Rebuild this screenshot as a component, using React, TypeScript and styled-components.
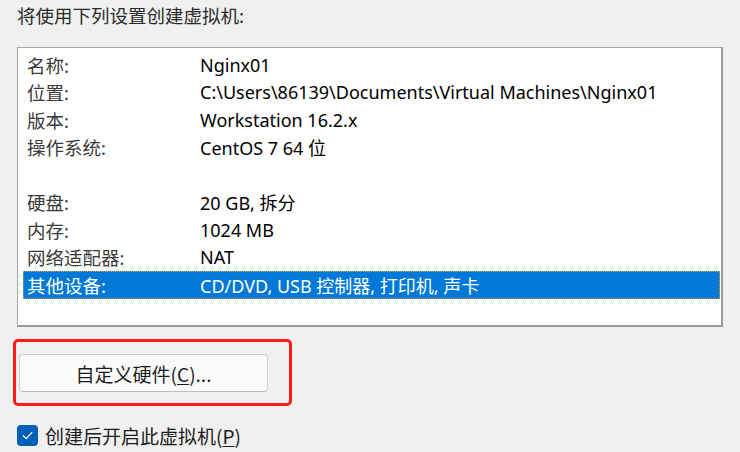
import React from "react";
import styled, { createGlobalStyle } from "styled-components";

const Global = createGlobalStyle`
  html, body { margin: 0; padding: 0; background: #f0f0f0; }
  body { font-family: "Noto Sans", "Noto Sans CJK SC", sans-serif; }
`;

const Page = styled.div`
  width: 740px;
  height: 452px;
  box-sizing: border-box;
  padding: 3px 0 0 17px;
  background: #f0f0f0;
  overflow: hidden;
  display: flex;
  flex-direction: column;
  align-items: flex-start;
`;

const Heading = styled.div`
  font-size: 18.5px;
  line-height: 24px;
  color: #2b2b2b;
  font-family: "Noto Sans CJK SC", "Noto Sans", sans-serif;
`;

const ListBox = styled.div`
  margin-top: 20px;
  width: 706px;
  height: 280px;
  box-sizing: border-box;
  background: #fff;
  border: 1px solid #a9a9a9;
  border-right: 2px solid #9a9a9a;
  border-bottom: 2px solid #9a9a9a;
  padding: 3px 1px 0 5px;
  display: flex;
  flex-direction: column;
`;

const Row = styled.div<{ $selected?: boolean }>`
  display: grid;
  grid-template-columns: 173px 1fr;
  height: 27.5px;
  align-items: center;
  box-sizing: border-box;
  padding-left: 4px;
  font-size: 18px;
  background: ${(p) => (p.$selected ? "#0078d7" : "transparent")};
  outline: ${(p) => (p.$selected ? "1px dotted #e39a4a" : "none")};
  outline-offset: -1px;
  color: ${(p) => (p.$selected ? "#fff" : "#000")};
`;

const Label = styled.span<{ $selected?: boolean }>`
  font-size: 18.5px;
  color: ${(p) => (p.$selected ? "#fff" : "#3a3a3a")};
  white-space: nowrap;
`;

const Value = styled.span`
  white-space: nowrap;
`;

const Spacer = styled.div`
  height: 27.5px;
`;

const Highlight = styled.div`
  margin: 12px 0 0 -4px;
  border: 3px solid #ff1c17;
  border-radius: 5px;
  padding: 12px 21px 11px 3px;
  display: flex;
`;

const Button = styled.button`
  width: 249px;
  height: 38px;
  box-sizing: border-box;
  background: #fbfbfb;
  border: 1px solid #d0d0d0;
  border-bottom-color: #bdbdbd;
  border-radius: 4px;
  font-family: "Noto Sans CJK SC", "Noto Sans", sans-serif;
  font-size: 19px;
  color: #1b1b1b;
  display: flex;
  align-items: center;
  justify-content: center;
  padding: 0;
`;

const U = styled.span`
  text-decoration: underline;
  text-underline-offset: 2px;
`;

const CheckRow = styled.label`
  margin-top: 16px;
  display: flex;
  align-items: center;
  gap: 7px;
  font-family: "Noto Sans CJK SC", "Noto Sans", sans-serif;
  font-size: 19px;
  color: #1b1b1b;
`;

const Box = styled.span`
  width: 21px;
  height: 21px;
  border-radius: 4px;
  background: #005fb8;
  display: flex;
  align-items: center;
  justify-content: center;
`;

const rows: [string, string][] = [
  ["名称:", "Nginx01"],
  ["位置:", "C:\\Users\\86139\\Documents\\Virtual Machines\\Nginx01"],
  ["版本:", "Workstation 16.2.x"],
  ["操作系统:", "CentOS 7 64 位"],
];
const rows2: [string, string][] = [
  ["硬盘:", "20 GB, 拆分"],
  ["内存:", "1024 MB"],
  ["网络适配器:", "NAT"],
];

export default function App() {
  return (
    <>
      <Global />
      <Page>
        <Heading>将使用下列设置创建虚拟机:</Heading>
        <ListBox>
          {rows.map(([l, v]) => (
            <Row key={l}>
              <Label>{l}</Label>
              <Value>{v}</Value>
            </Row>
          ))}
          <Spacer />
          {rows2.map(([l, v]) => (
            <Row key={l}>
              <Label>{l}</Label>
              <Value>{v}</Value>
            </Row>
          ))}
          <Row $selected>
            <Label $selected>其他设备:</Label>
            <Value>CD/DVD, USB 控制器, 打印机, 声卡</Value>
          </Row>
        </ListBox>
        <Highlight>
          <Button>
            自定义硬件(<U>C</U>)...
          </Button>
        </Highlight>
        <CheckRow>
          <Box>
            <svg width="13" height="13" viewBox="0 0 13 13">
              <path d="M2.2 6.8 L5.2 9.6 L10.8 3.6" fill="none" stroke="#fff" strokeWidth="1.3" strokeLinecap="round" strokeLinejoin="round" />
            </svg>
          </Box>
          <span>
            创建后开启此虚拟机(<U>P</U>)
          </span>
        </CheckRow>
      </Page>
    </>
  );
}
